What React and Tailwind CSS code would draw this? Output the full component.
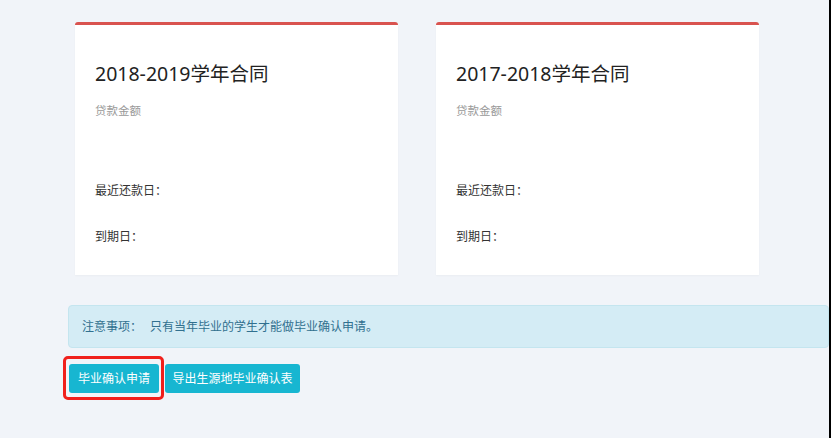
export default function App() {
  const font = { fontFamily: '"Noto Sans", "Noto Sans CJK SC", sans-serif' };
  const cards = ["2018-2019学年合同", "2017-2018学年合同"];
  return (
    <div className="flex w-[831px] h-[438px] overflow-hidden bg-[#f1f4f9]" style={font}>
      <div className="flex-1 flex flex-col pt-[22px]">
        <div className="flex pl-[75px] gap-[38px]">
          {cards.map((t) => (
            <div
              key={t}
              className="w-[323px] h-[253px] bg-white rounded-t-[3px] border-t-[3px] border-[#d9534f] px-5 pt-[35px] shadow-[0_1px_2px_rgba(0,0,0,0.03)]"
            >
              <div className="text-[19.5px] leading-[28px] text-[#222]">{t}</div>
              <div className="mt-[15px] text-[11.5px] leading-[16px] text-[#999]">贷款金额</div>
              <div className="mt-[64px] text-[12px] leading-[16px] text-[#333]">最近还款日：</div>
              <div className="mt-[30px] text-[12px] leading-[16px] text-[#333]">到期日：</div>
            </div>
          ))}
        </div>
        <div className="mt-[30px] ml-[68px] h-[43px] flex items-center bg-[#d4ecf5] border border-[#c4e5ef] rounded-[4px] pl-[13px] text-[12px] text-[#31708f]">
          <span className="w-[68px]">注意事项：</span>
          <span>只有当年毕业的学生才能做毕业确认申请。</span>
        </div>
        <div className="mt-[16px] ml-[69px] flex gap-[6px]">
          <div className="relative">
            <button className="w-[90px] h-[29px] bg-[#17b6d1] rounded-[3px] text-white text-[12px]">毕业确认申请</button>
            <div className="absolute left-[-6px] top-[-8px] right-[-5px] bottom-[-7px] border-[3px] border-[#f0201c] rounded-[5px] pointer-events-none"></div>
          </div>
          <button className="w-[135px] h-[29px] bg-[#17b6d1] rounded-[3px] text-white text-[12px]">导出生源地毕业确认表</button>
        </div>
      </div>
      <div className="w-[2px] bg-black"></div>
    </div>
  );
}
